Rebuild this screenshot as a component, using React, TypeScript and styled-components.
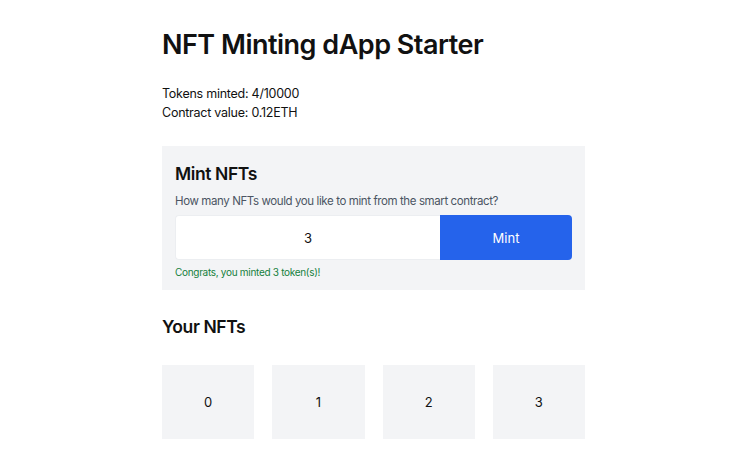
import { createGlobalStyle, styled } from "styled-components";

const GlobalStyle = createGlobalStyle`
  body {
    margin: 0;
    background: #ffffff;
    font-family: Inter, "Liberation Sans", sans-serif;
    color: #111111;
  }
`;

export default function App() {
  const nfts = [0, 1, 2, 3];

  return (
    <>
      <GlobalStyle />
      <Page>
        <Title>NFT Minting dApp Starter</Title>
        <Stats>
          <StatLine>Tokens minted: 4/10000</StatLine>
          <StatLine>Contract value: 0.12ETH</StatLine>
        </Stats>
        <MintPanel>
          <PanelTitle>Mint NFTs</PanelTitle>
          <Hint>How many NFTs would you like to mint from the smart contract?</Hint>
          <MintRow>
            <AmountInput type="number" defaultValue={3} />
            <MintButton>Mint</MintButton>
          </MintRow>
          <Success>Congrats, you minted 3 token(s)!</Success>
        </MintPanel>
        <SectionTitle>Your NFTs</SectionTitle>
        <Grid>
          {nfts.map((n) => (
            <Tile key={n}>{n}</Tile>
          ))}
        </Grid>
      </Page>
    </>
  );
}

const Page = styled.div`
  width: 423px;
  margin: 0 auto;
  padding-top: 28px;
  padding-left: 3px;
`;

const Title = styled.h1`
  margin: 0;
  font-size: 27px;
  font-weight: 600;
  line-height: 34px;
  letter-spacing: -0.5px;
`;

const Stats = styled.div`
  margin-top: 22px;
  display: flex;
  flex-direction: column;
`;

const StatLine = styled.div`
  font-size: 12.5px;
  line-height: 19px;
  letter-spacing: -0.25px;
`;

const MintPanel = styled.div`
  margin-top: 24px;
  background: #f3f4f6;
  padding: 15px 13px 11px 13px;
`;

const PanelTitle = styled.h2`
  margin: 0;
  font-size: 17.5px;
  font-weight: 600;
  line-height: 26px;
  letter-spacing: -0.4px;
`;

const Hint = styled.p`
  margin: 6px 0 0;
  font-size: 11.5px;
  line-height: 16px;
  letter-spacing: -0.4px;
  color: #4b5563;
`;

const MintRow = styled.div`
  margin-top: 6px;
  display: flex;
  height: 45px;
`;

const AmountInput = styled.input`
  flex: 0 0 265px;
  box-sizing: border-box;
  border: 1px solid #eceef1;
  border-right: none;
  border-radius: 4px 0 0 4px;
  background: #ffffff;
  text-align: center;
  font-family: inherit;
  font-size: 13px;
  color: #111111;
  outline: none;
  appearance: textfield;
  -moz-appearance: textfield;

  &::-webkit-outer-spin-button,
  &::-webkit-inner-spin-button {
    -webkit-appearance: none;
    margin: 0;
  }
`;

const MintButton = styled.button`
  flex: 1;
  border: none;
  border-radius: 0 4px 4px 0;
  background: #2563eb;
  color: #ffffff;
  font-family: inherit;
  font-size: 13px;
  cursor: pointer;
`;

const Success = styled.p`
  margin: 5px 0 0;
  font-size: 10px;
  line-height: 14px;
  letter-spacing: -0.3px;
  color: #15803d;
`;

const SectionTitle = styled.h2`
  margin: 25px 0 0;
  font-size: 17.5px;
  font-weight: 600;
  line-height: 24px;
  letter-spacing: -0.4px;
`;

const Grid = styled.div`
  margin-top: 26px;
  display: grid;
  grid-template-columns: repeat(4, 1fr);
  column-gap: 18px;
`;

const Tile = styled.div`
  height: 74px;
  background: #f3f4f6;
  display: flex;
  align-items: center;
  justify-content: center;
  font-size: 13px;
`;
